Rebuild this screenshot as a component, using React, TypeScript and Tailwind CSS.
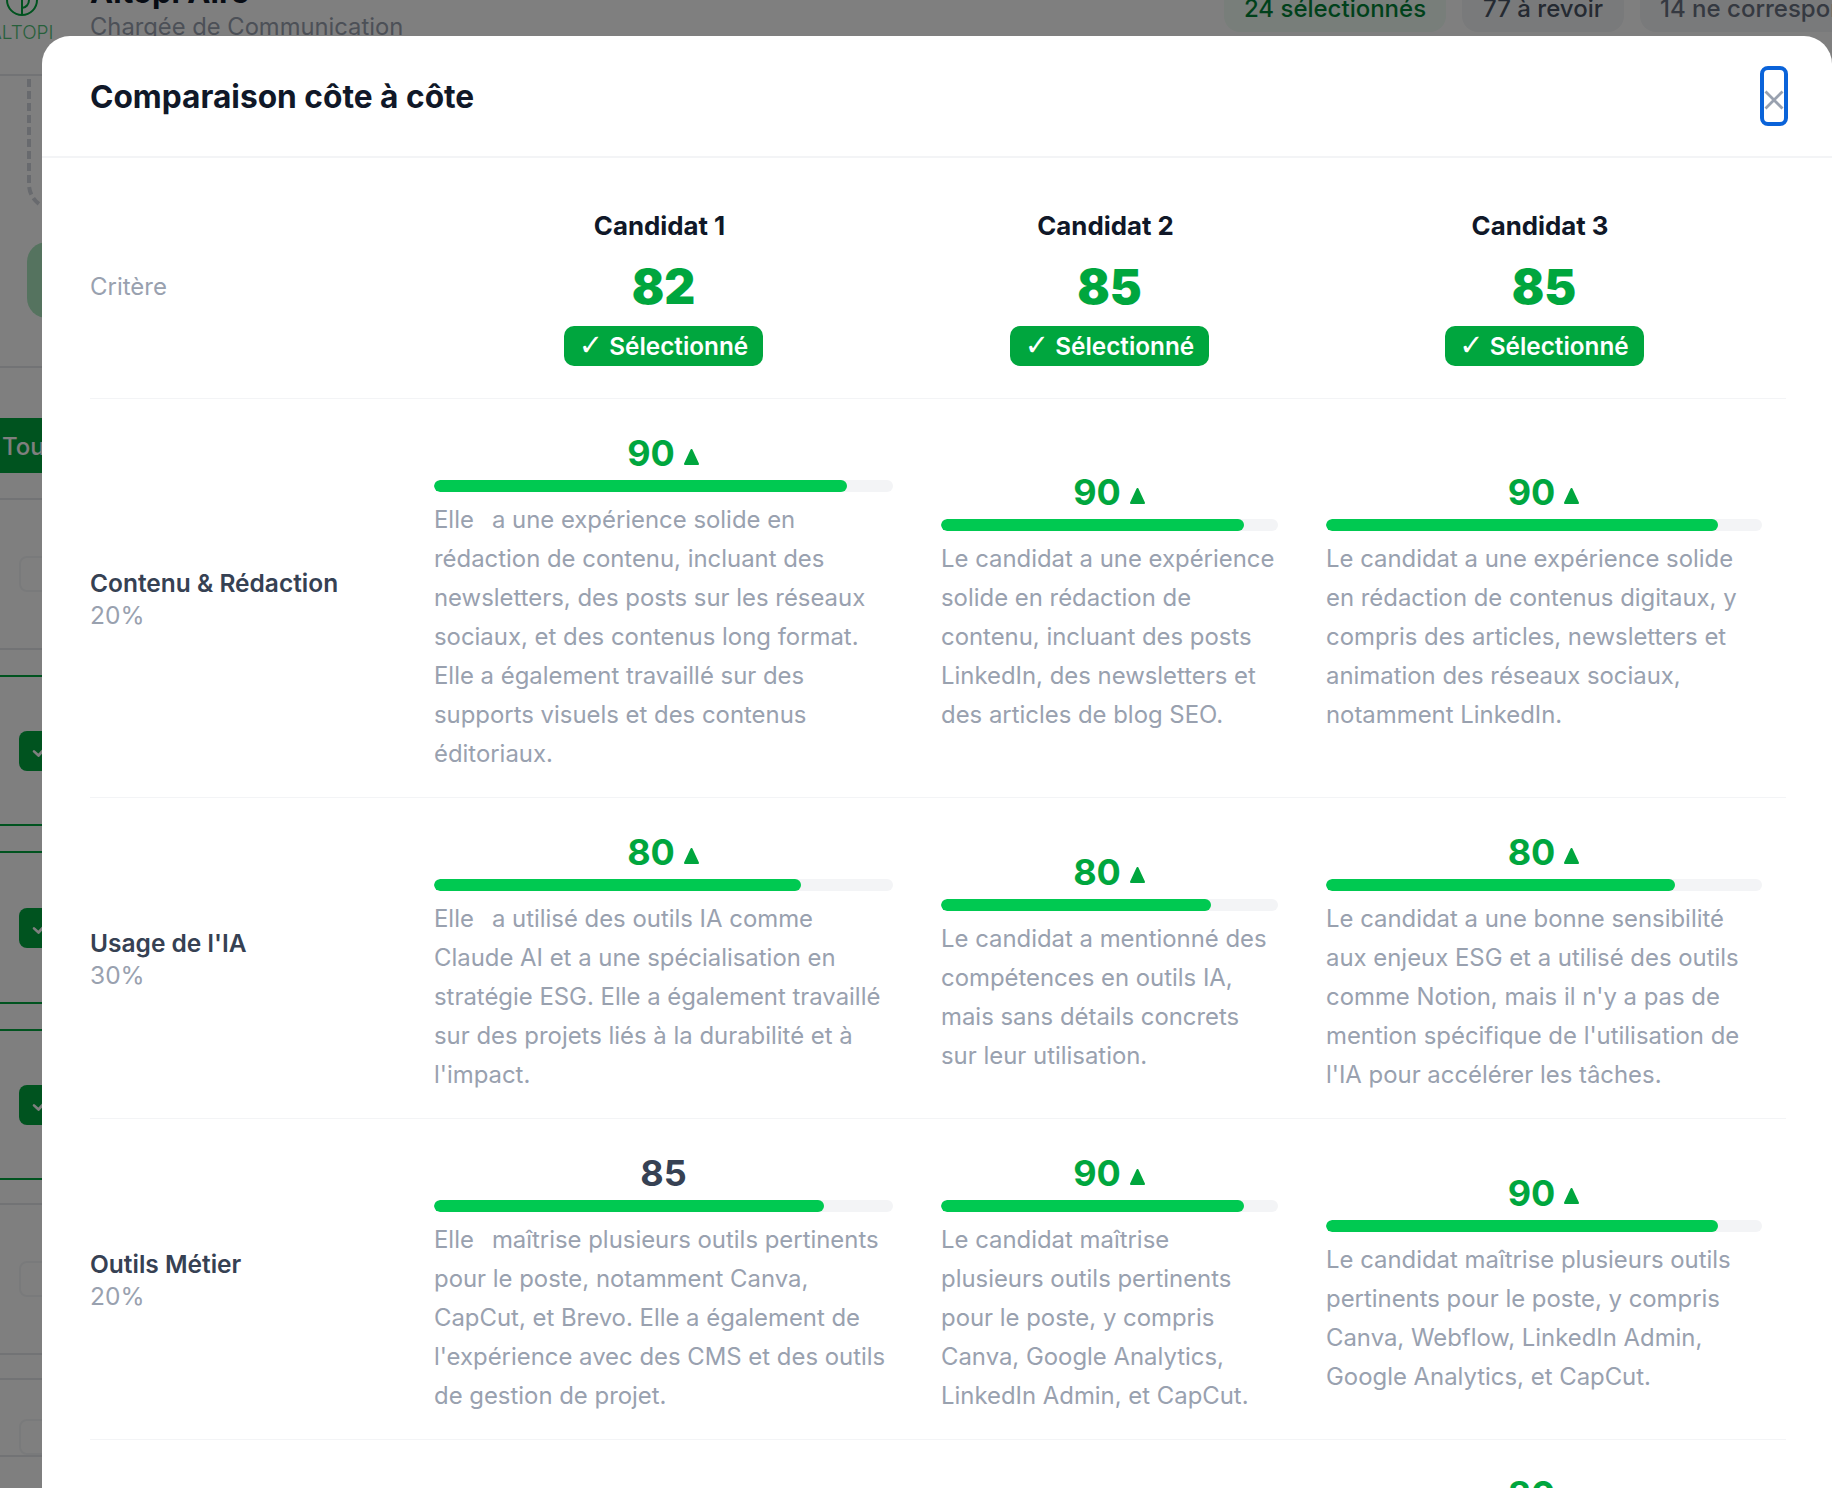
import React from 'react';

// ── Data ───────────────────────────────────────────────────────────────────────

interface Cell { score: number; up: boolean; text: React.ReactNode }
interface Row { label: string; weight: string; cells: Cell[] }

const GAP = <span className="inline-block w-[18px]" />;

const ROWS: Row[] = [
  {
    label: 'Contenu & Rédaction',
    weight: '20%',
    cells: [
      { score: 90, up: true, text: <>Elle{GAP}a une expérience solide en rédaction de contenu, incluant des newsletters, des posts sur les réseaux sociaux, et des contenus long format. Elle a également travaillé sur des supports visuels et des contenus éditoriaux.</> },
      { score: 90, up: true, text: "Le candidat a une expérience solide en rédaction de contenu, incluant des posts LinkedIn, des newsletters et des articles de blog SEO." },
      { score: 90, up: true, text: "Le candidat a une expérience solide en rédaction de contenus digitaux, y compris des articles, newsletters et animation des réseaux sociaux, notamment LinkedIn." },
    ],
  },
  {
    label: "Usage de l'IA",
    weight: '30%',
    cells: [
      { score: 80, up: true, text: <>Elle{GAP}a utilisé des outils IA comme Claude AI et a une spécialisation en stratégie ESG. Elle a également travaillé sur des projets liés à la durabilité et à l'impact.</> },
      { score: 80, up: true, text: "Le candidat a mentionné des compétences en outils IA, mais sans détails concrets sur leur utilisation." },
      { score: 80, up: true, text: "Le candidat a une bonne sensibilité aux enjeux ESG et a utilisé des outils comme Notion, mais il n'y a pas de mention spécifique de l'utilisation de l'IA pour accélérer les tâches." },
    ],
  },
  {
    label: 'Outils Métier',
    weight: '20%',
    cells: [
      { score: 85, up: false, text: <>Elle{GAP}maîtrise plusieurs outils pertinents pour le poste, notamment Canva, CapCut, et Brevo. Elle a également de l'expérience avec des CMS et des outils de gestion de projet.</> },
      { score: 90, up: true, text: <>Le candidat maîtrise<br />plusieurs outils pertinents pour le poste, y compris Canva, Google Analytics, LinkedIn Admin, et CapCut.</> },
      { score: 90, up: true, text: "Le candidat maîtrise plusieurs outils pertinents pour le poste, y compris Canva, Webflow, LinkedIn Admin, Google Analytics, et CapCut." },
    ],
  },
];

const CANDIDATES = [
  { name: 'Candidat 1', score: 82 },
  { name: 'Candidat 2', score: 85 },
  { name: 'Candidat 3', score: 85 },
];

const COLS = 'grid grid-cols-[320px_507px_385px_484px]';

// ── Score cell ─────────────────────────────────────────────────────────────────

const ScoreLine: React.FC<{ score: number; up: boolean }> = ({ score, up }) => (
  <div className={`h-[57px] pt-1 flex items-center justify-center gap-2 text-[36px] leading-[53px] font-bold ${up ? 'text-green-600' : 'text-gray-700'}`}>
    <span>{score}</span>
    {up && (
      <svg width="17" height="18" viewBox="0 0 17 18" className="mt-1.5">
        <path d="M8.5 2 L15 16 L2 16 Z" fill="#00a63e" stroke="#00a63e" strokeWidth="2" strokeLinejoin="round" />
      </svg>
    )}
  </div>
);

const ScoreCell: React.FC<{ cell: Cell }> = ({ cell }) => (
  <div className="px-6 py-6">
    <ScoreLine score={cell.score} up={cell.up} />
    <div className="h-3 rounded-full bg-gray-100 overflow-hidden">
      <div className="h-3 rounded-full bg-green-500" style={{ width: `${cell.score}%` }} />
    </div>
    <p className="mt-2 text-[23.9px] leading-[39px] text-gray-400">{cell.text}</p>
  </div>
);

// ── Page behind the dialog ─────────────────────────────────────────────────────

const Check: React.FC = () => (
  <div className="w-10 h-10 ml-[19px] rounded-lg bg-green-600 flex items-center pl-3 text-white shrink-0">
    <svg width="18" height="18" viewBox="0 0 24 24" fill="none" stroke="currentColor" strokeWidth="3.5" strokeLinecap="round" strokeLinejoin="round">
      <path d="M4 12.5 L10 18 L20 7" />
    </svg>
  </div>
);

const Empty: React.FC = () => (
  <div className="w-10 h-9 ml-[19px] rounded-lg border-2 border-gray-100 shrink-0" />
);

const BackgroundPage: React.FC = () => (
  <div className="w-full">
    {/* Top bar, scrolled partly out of view */}
    <div className="h-[76px] border-b-2 border-gray-200 flex items-start overflow-hidden">
      <div className="w-[90px] shrink-0 flex flex-col items-start">
        <svg width="34" height="18" viewBox="0 0 34 18" fill="none" stroke="#00a63e" strokeWidth="2" className="ml-[5px]">
          <circle cx="17" cy="0" r="15" />
          <path d="M17 0 V14 M17 8 C21 8 24 4 24 0" />
        </svg>
        <span className="text-[19px] leading-[20px] font-light text-green-600/70 -ml-[11px] mt-[5px] whitespace-nowrap">ALTOPI</span>
      </div>
      <div className="w-[1134px] shrink-0 -mt-[20px]">
        <div className="text-[31px] leading-[24px] font-bold text-gray-900">Altopi Aire</div>
        <div className="text-[23.75px] leading-[30px] text-gray-400 mt-2">Chargée de Communication</div>
      </div>
      <div className="flex gap-4 -mt-[14px] text-[24px] font-medium shrink-0">
        <span className="h-[46px] w-[222px] text-center rounded-2xl bg-green-50 text-green-700 leading-[46px]">24 sélectionnés</span>
        <span className="h-[46px] w-[162px] text-center rounded-2xl bg-gray-100 text-gray-600 leading-[46px]">77 à revoir</span>
        <span className="h-[46px] px-5 rounded-2xl bg-gray-100 text-gray-500 leading-[46px] whitespace-nowrap">14 ne correspondent pas</span>
      </div>
    </div>
    <div className="h-[292px] border-b-2 border-gray-200 flex flex-col">
      <svg width="60" height="166" viewBox="0 0 60 166" fill="none" className="shrink-0">
        <path d="M29 3 V108 Q29 120 39 128" stroke="#d1d5dc" strokeWidth="4" strokeDasharray="8 4" />
      </svg>
      <div className="w-[60px] h-[76px] ml-[27px] rounded-[20px] bg-[#aae6bf]" />
    </div>
    <div className="h-[50px]" />
    <div className="h-[55px] bg-green-600 text-white text-[24px] leading-[57px] font-medium pl-[2px]">Tous</div>
    <div className="h-[27px] border-b-2 border-gray-200" />
    <div className="h-[150px] border-b-2 border-gray-200 flex items-center"><Empty /></div>
    <div className="h-[25px]" />
    <div className="h-[151px] border-y-2 border-green-600 flex items-center"><Check /></div>
    <div className="h-[25px]" />
    <div className="h-[153px] border-y-2 border-green-600 flex items-center"><Check /></div>
    <div className="h-[25px]" />
    <div className="h-[151px] border-y-2 border-green-600 flex items-center"><Check /></div>
    <div className="h-[25px] border-b-2 border-gray-200" />
    <div className="h-[150px] border-b-2 border-gray-200 flex items-center"><Empty /></div>
    <div className="h-[25px] border-b-2 border-gray-200" />
    <div className="h-[77px] border-b-2 border-gray-200 flex items-end"><Empty /></div>
  </div>
);

// ── App ────────────────────────────────────────────────────────────────────────

export default function App() {
  return (
    <div className="relative w-[1832px] h-[1488px] overflow-hidden bg-white font-['Inter',sans-serif]">
      <BackgroundPage />

      {/* Dialog */}
      <div className="absolute inset-0 bg-black/50 pt-9 pl-[42px]">
        <div className="w-[1790px] h-[1600px] bg-white rounded-[28px]">
          <div className="h-[122px] border-b-2 border-gray-100 flex items-center justify-between pl-12 pr-[44px]">
            <h2 className="text-[31.7px] font-bold text-gray-900 pt-0.5">Comparaison côte à côte</h2>
            <button className="w-7 h-[60px] rounded-lg border-4 border-[#0a63d9] flex items-center justify-center pt-2">
              <svg width="20" height="20" viewBox="0 0 20 20" stroke="#99a1af" strokeWidth="2.8" className="shrink-0">
                <path d="M1.5 1.5 L18.5 18.5 M18.5 1.5 L1.5 18.5" />
              </svg>
            </button>
          </div>

          <div className="pl-12 pt-4 w-[1744px]">
            {/* Header row */}
            <div className={`${COLS} items-center border-b border-gray-100`}>
              <div className="text-[24px] text-gray-400 pt-0.5">Critère</div>
              {CANDIDATES.map(c => (
                <div key={c.name} className="pt-6 pb-8 flex flex-col items-center">
                  <div className="text-[25.8px] leading-[56px] font-bold text-gray-900 pr-2">{c.name}</div>
                  <div className="text-[48px] leading-[66px] font-black text-green-600">{c.score}</div>
                  <div className="mt-1.5 h-10 w-[199px] rounded-[10px] bg-green-600 text-white text-[24.3px] leading-[41px] font-semibold text-center">
                    <span className="font-['DejaVu_Sans',sans-serif] font-bold text-[29px] leading-none">✓</span> Sélectionné
                  </div>
                </div>
              ))}
            </div>

            {/* Criteria rows */}
            {ROWS.map(row => (
              <div key={row.label} className={`${COLS} items-center border-b border-gray-100`}>
                <div className="text-[24.5px] leading-[32px] pt-0.5">
                  <div className="font-semibold text-gray-700">{row.label}</div>
                  <div className="text-gray-400">{row.weight}</div>
                </div>
                {row.cells.map((cell, i) => <ScoreCell key={i} cell={cell} />)}
              </div>
            ))}

            {/* Next row, cut by the window */}
            <div className={COLS}>
              <div className="col-start-4 px-6 py-6">
                <ScoreLine score={80} up />
              </div>
            </div>
          </div>
        </div>
      </div>
    </div>
  );
}
